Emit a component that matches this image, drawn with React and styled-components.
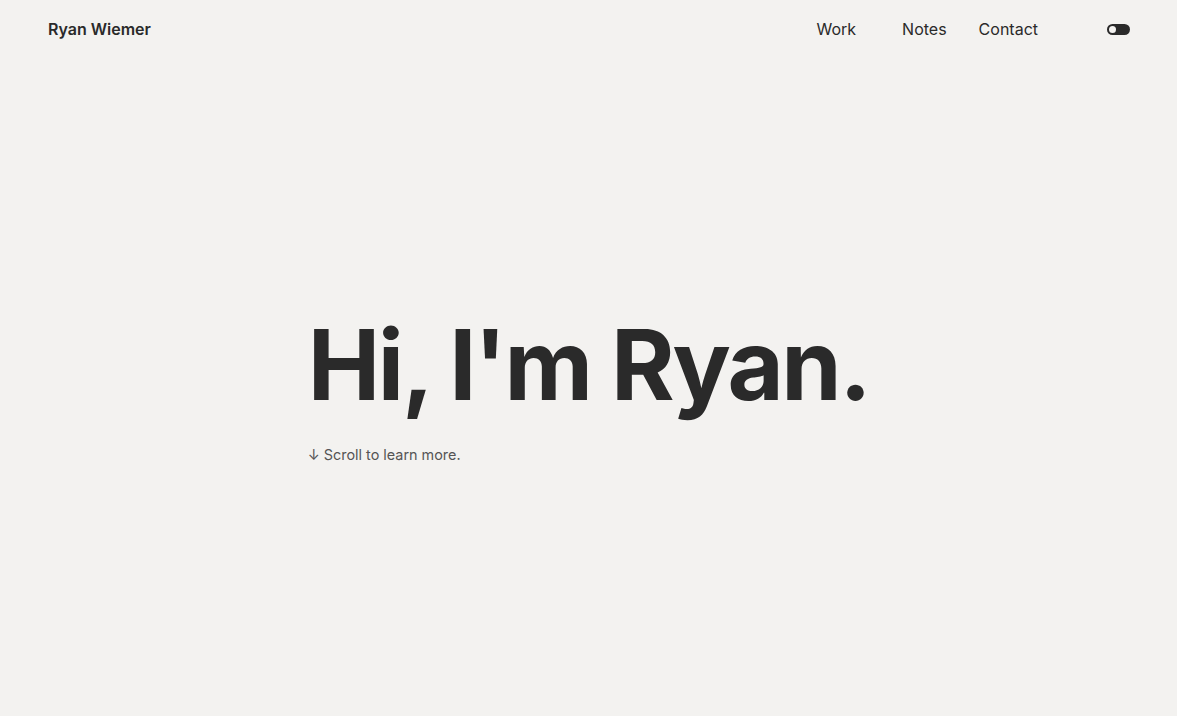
import React from "react";
import styled, { createGlobalStyle } from "styled-components";

const Global = createGlobalStyle`
  html, body { margin: 0; padding: 0; background: #f3f2f0; }
  body { font-family: Inter, "Noto Sans", sans-serif; color: #2a2a2a; -webkit-font-smoothing: antialiased; }
`;

const Page = styled.div`
  height: 716px;
  display: flex;
  flex-direction: column;
  background: #f3f2f0;
`;

const Header = styled.header`
  display: flex;
  align-items: center;
  justify-content: space-between;
  height: 58px;
  padding: 0 47px 0 48px;
`;

const Brand = styled.a`
  font-size: 16px;
  font-weight: 600;
  color: #2a2a2a;
  text-decoration: none;
`;

const Nav = styled.nav`
  display: flex;
  align-items: center;
`;

const NavLink = styled.a`
  font-size: 16px;
  font-weight: 400;
  color: #2a2a2a;
  text-decoration: none;
  margin-left: ${(p) => p.$gap}px;
`;

const Toggle = styled.button`
  position: relative;
  width: 23px;
  height: 11px;
  border-radius: 6px;
  background: #2a2a2a;
  border: none;
  padding: 0;
  margin-left: 69px;
  cursor: pointer;
  &::after {
    content: "";
    position: absolute;
    left: 2px;
    top: 2px;
    width: 7px;
    height: 7px;
    border-radius: 50%;
    background: #f3f2f0;
  }
`;

const Hero = styled.main`
  flex: 1;
  display: flex;
  align-items: center;
  justify-content: center;
  padding-bottom: 4px;
`;

const HeroInner = styled.div`
  display: flex;
  flex-direction: column;
  align-items: flex-start;
`;

const Title = styled.h1`
  margin: 0;
  font-size: 97px;
  font-weight: 700;
  letter-spacing: -0.025em;
  line-height: 1.2;
  color: #2a2a2a;
`;

const Sub = styled.p`
  margin: 22px 0 0 0;
  font-size: 14.4px;
  color: #555;
  display: flex;
  align-items: center;
  gap: 4px;
`;

export default function App() {
  return (
    <>
      <Global />
      <Page>
        <Header>
          <Brand href="#">Ryan Wiemer</Brand>
          <Nav>
            <NavLink href="#" $gap={0}>Work</NavLink>
            <NavLink href="#" $gap={46}>Notes</NavLink>
            <NavLink href="#" $gap={32}>Contact</NavLink>
            <Toggle aria-label="Toggle theme" />
          </Nav>
        </Header>
        <Hero>
          <HeroInner>
            <Title>Hi, I'm Ryan.</Title>
            <Sub>
              <span>↓</span>
              <span>Scroll to learn more.</span>
            </Sub>
          </HeroInner>
        </Hero>
      </Page>
    </>
  );
}
